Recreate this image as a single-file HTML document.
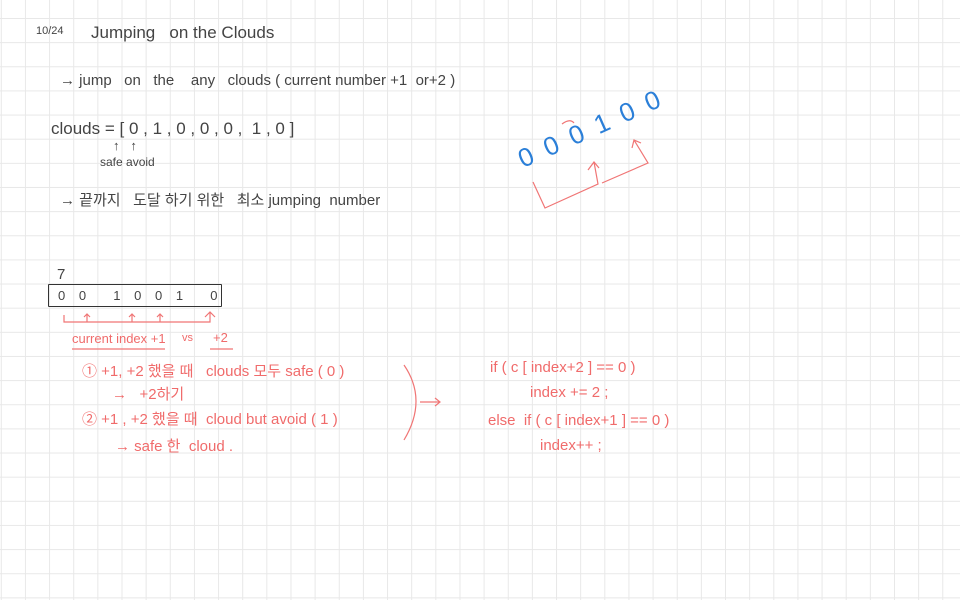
<!DOCTYPE html>
<html><head><meta charset="utf-8"><style>
html,body{margin:0;padding:0}
body{width:960px;height:600px;position:relative;overflow:hidden;background:#fff;
background-image:linear-gradient(to right,#e8e8e8 1px,transparent 1px),linear-gradient(to bottom,#e8e8e8 1px,transparent 1px);
background-size:24.15px 24.15px;background-position:0.8px 18px;
font-family:"Liberation Sans","Noto Sans CJK KR",sans-serif;}
.t{position:absolute;white-space:nowrap;color:#444;font-size:15px;line-height:1}
.r{color:#f06b6b}
.b{color:#2b7fd8}
</style></head><body>
<div class="t" style="left:36px;top:26px;font-size:11px">10/24</div>
<div class="t" style="left:91px;top:24px;font-size:17px">Jumping &nbsp; on the Clouds</div>
<div class="t" style="left:60px;top:73px">→ jump &nbsp; on &nbsp; the &nbsp;&nbsp; any &nbsp; clouds ( current number +1 &nbsp;or+2 )</div>
<div class="t" style="left:51px;top:120px;font-size:17px">clouds = [ 0 , 1 , 0 , 0 , 0 , &nbsp;1 , 0 ]</div>
<div class="t" style="left:113px;top:139px;font-size:13px">↑ &nbsp;&nbsp;↑</div>
<div class="t" style="left:100px;top:156px;font-size:12px">safe avoid</div>
<div class="t" style="left:60px;top:193px">→ 끝까지 &nbsp; 도달 하기 위한 &nbsp; 최소 jumping &nbsp;number</div>
<div class="t" style="left:57px;top:267px;font-size:15px">7</div>
<div style="position:absolute;left:48px;top:284px;width:172px;height:21px;border:1.5px solid #333;border-radius:1px"></div>
<div class="t" style="left:58px;top:289px;font-size:13px;word-spacing:10px">0 0 &nbsp;1 0 0 1 &nbsp;0</div>
<svg style="position:absolute;left:0;top:0" width="960" height="600" fill="none" stroke="#f07575" stroke-width="1.2">
<path d="M64 315 V322 H210 V312 M205 317 L210 312 L215 317 M87 322 V314 M84 317 L87 314 L90 317 M132 322 V314 M129 317 L132 314 L135 317 M160 322 V314 M157 317 L160 314 L163 317"/>
<path d="M72 349 H165 M210 349 H233"/>
<path d="M404 365 Q428 400 404 440 M420 402 H440 M435 398 L440 402 L435 406"/>
<path d="M533 182 L545 208 L598 184 L594 162 M588 170 L594 162 L599 168 M602 183 L648 163 L634 140 M632 148 L634 140 L641 143 M562 124 Q570 118 574 123"/>
</svg>
<div class="t r" style="left:72px;top:332px;font-size:13px">current index +1</div>
<div class="t r" style="left:182px;top:333px;font-size:11px">vs</div>
<div class="t r" style="left:213px;top:331px;font-size:13px">+2</div>
<div class="t r" style="left:82px;top:364px">① +1, +2 했을 때 &nbsp; clouds 모두 safe ( 0 )</div>
<div class="t r" style="left:112px;top:387px">→ &nbsp; +2하기</div>
<div class="t r" style="left:82px;top:412px">② +1 , +2 했을 때 &nbsp;cloud but avoid ( 1 )</div>
<div class="t r" style="left:115px;top:439px">→ safe 한 &nbsp;cloud .</div>
<div class="t r" style="left:490px;top:360px">if ( c [ index+2 ] == 0 )</div>
<div class="t r" style="left:530px;top:385px">index += 2 ;</div>
<div class="t r" style="left:488px;top:413px">else &nbsp;if ( c [ index+1 ] == 0 )</div>
<div class="t r" style="left:540px;top:438px">index++ ;</div>
<div class="t b" style="left:514px;top:148px;font-size:26px;transform:rotate(-24deg);transform-origin:left top;letter-spacing:3px">0 0 0 1 0 0</div>
</body></html>
